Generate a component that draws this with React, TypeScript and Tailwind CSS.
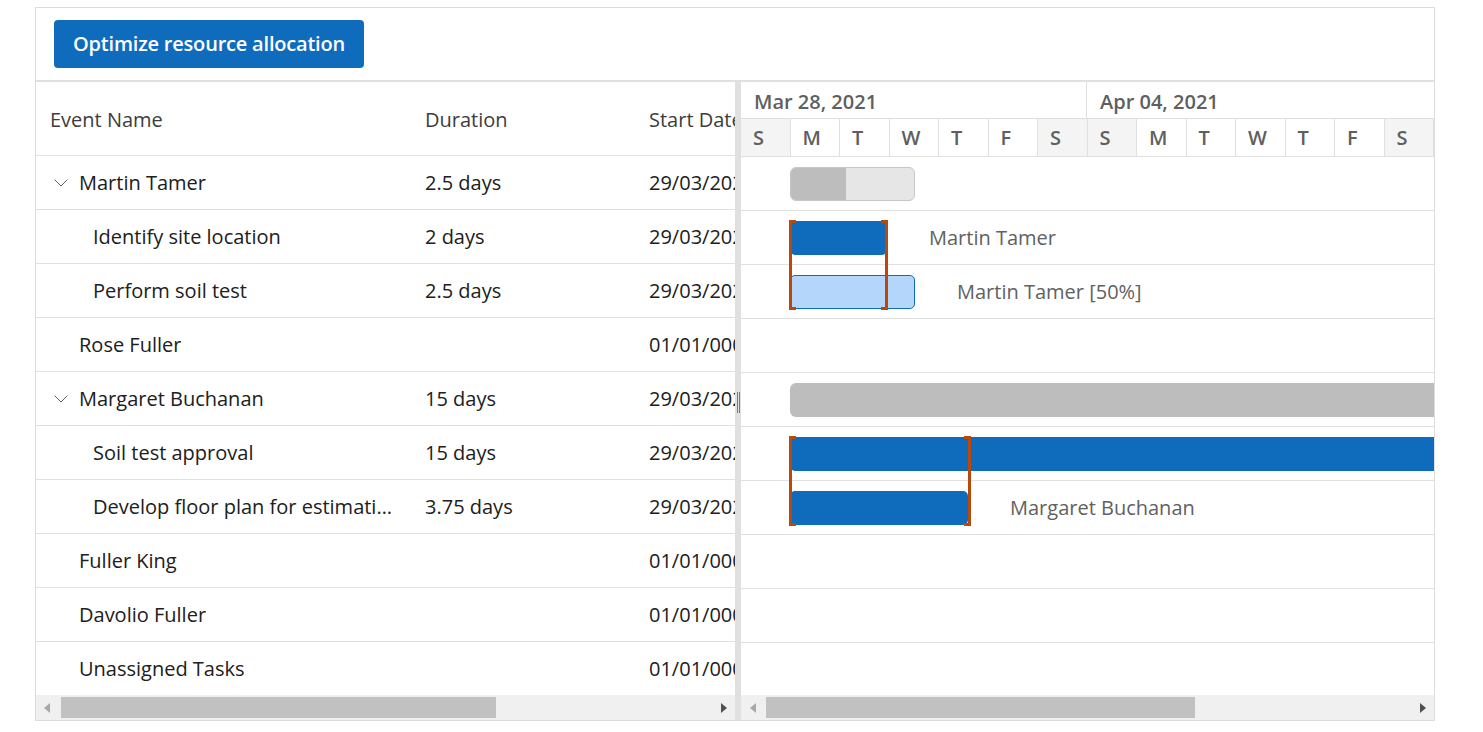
import { ChevronDown } from "lucide-react";

type Row = {
  name: string;
  level: 0 | 1;
  expandable?: boolean;
  duration?: string;
  start: string;
};

const rows: Row[] = [
  { name: "Martin Tamer", level: 0, expandable: true, duration: "2.5 days", start: "29/03/2021" },
  { name: "Identify site location", level: 1, duration: "2 days", start: "29/03/2021" },
  { name: "Perform soil test", level: 1, duration: "2.5 days", start: "29/03/2021" },
  { name: "Rose Fuller", level: 0, start: "01/01/0001" },
  { name: "Margaret Buchanan", level: 0, expandable: true, duration: "15 days", start: "29/03/2021" },
  { name: "Soil test approval", level: 1, duration: "15 days", start: "29/03/2021" },
  { name: "Develop floor plan for estimation", level: 1, duration: "3.75 days", start: "29/03/2021" },
  { name: "Fuller King", level: 0, start: "01/01/0001" },
  { name: "Davolio Fuller", level: 0, start: "01/01/0001" },
  { name: "Unassigned Tasks", level: 0, start: "01/01/0001" },
];

const days = ["S", "M", "T", "W", "T", "F", "S", "S", "M", "T", "W", "T", "F", "S"];

function LeftArrow({ dim = false }: { dim?: boolean }) {
  return (
    <svg width="6" height="10" viewBox="0 0 6 10">
      <polygon points="6,0 6,10 0,5" fill={dim ? "#a8a8a8" : "#505050"} />
    </svg>
  );
}

function RightArrow() {
  return (
    <svg width="6" height="10" viewBox="0 0 6 10">
      <polygon points="0,0 0,10 6,5" fill="#505050" />
    </svg>
  );
}

function Bracket({ left, top, width, height }: { left: number; top: number; width: number; height: number }) {
  return (
    <div className="absolute" style={{ left, top, width, height }}>
      <div className="absolute left-0 top-0 h-full w-[3px] bg-[#b8490c]" />
      <div className="absolute left-0 top-0 h-[3px] w-[7px] bg-[#b8490c]" />
      <div className="absolute left-0 bottom-0 h-[3px] w-[7px] bg-[#b8490c]" />
      <div className="absolute right-0 top-0 h-full w-[3px] bg-[#b8490c]" />
      <div className="absolute right-0 top-0 h-[3px] w-[7px] bg-[#b8490c]" />
      <div className="absolute right-0 bottom-0 h-[3px] w-[7px] bg-[#b8490c]" />
    </div>
  );
}

function ChartRow({ children }: { children?: React.ReactNode }) {
  return (
    <div className="flex h-[54px] items-center border-b border-[#e0e0e0] pl-[49px] whitespace-nowrap">
      {children}
    </div>
  );
}

function Label({ text }: { text: string }) {
  return <span className="ml-[42px] pt-[1px] text-[20px] text-[#616161]">{text}</span>;
}

export default function App() {
  return (
    <div className="min-h-screen bg-white pt-[7px] pl-[35px] font-['Open_Sans','Noto_Sans',sans-serif]">
      <div className="flex h-[714px] w-[1400px] flex-col border border-[#dcdcdc]">
        {/* Toolbar */}
        <div className="flex h-[74px] shrink-0 items-start border-b-2 border-[#e0e0e0] pt-[12px] pl-[18px]">
          <button className="h-[48px] rounded-[4px] bg-[#0f6cbd] px-[19px] text-[20px] font-semibold text-white tracking-[-0.2px]">
            Optimize resource allocation
          </button>
        </div>

        <div className="flex min-h-0 flex-1">
          {/* Grid pane */}
          <div className="flex w-[699px] shrink-0 flex-col overflow-hidden">
            <div className="flex h-[74px] shrink-0 items-center border-b border-[#e0e0e0] pt-[3px] text-[20px] text-[#3d3d3d]">
              <div className="w-[375px] shrink-0 pl-[14px]">Event Name</div>
              <div className="w-[224px] shrink-0 pl-[14px]">Duration</div>
              <div className="w-[150px] shrink-0 whitespace-nowrap pl-[14px]">Start Date</div>
            </div>
            <div className="flex-1 overflow-hidden">
              {rows.map((r, i) => (
                <div key={i} className="flex h-[54px] items-center border-b border-[#e0e0e0] pt-[1px] text-[20px] text-[#202020]">
                  <div className="flex w-[375px] shrink-0 items-center pr-[18px]">
                    {r.level === 0 ? (
                      <span className="flex w-[43px] shrink-0 items-center pl-[13px]">
                        {r.expandable && <ChevronDown size={24} strokeWidth={1} className="-mt-[1px] text-[#616161]" />}
                      </span>
                    ) : (
                      <span className="w-[57px] shrink-0" />
                    )}
                    <span className="truncate">{r.name}</span>
                  </div>
                  <div className="w-[224px] shrink-0 pl-[14px]">{r.duration ?? ""}</div>
                  <div className="w-[150px] shrink-0 whitespace-nowrap pl-[14px]">{r.start}</div>
                </div>
              ))}
            </div>
            <div className="flex h-[25px] shrink-0 items-center bg-[#f0f0f0]">
              <span className="ml-[8px] flex w-[12px]"><LeftArrow dim /></span>
              <div className="ml-[5px] h-[21px] w-[435px] bg-[#c1c1c1]" />
              <span className="ml-auto mr-[8px] flex"><RightArrow /></span>
            </div>
          </div>

          {/* Splitter */}
          <div className="flex w-[6px] shrink-0 flex-col items-center bg-[#e0e0e0]">
            <div className="mt-[310px] flex h-[21px] gap-[1px]">
              <div className="w-[1px] bg-[#7a7a7a]" />
              <div className="w-[1px] bg-[#7a7a7a]" />
            </div>
          </div>

          {/* Chart pane */}
          <div className="flex min-w-0 flex-1 flex-col overflow-hidden">
            <div className="shrink-0 text-[20px] font-semibold text-[#5f5f5f]">
              <div className="flex h-[37px] border-b border-[#e0e0e0]">
                <div className="flex w-[346px] shrink-0 items-center border-r border-[#e0e0e0] pt-[3px] pl-[13px]">Mar 28, 2021</div>
                <div className="flex w-[346px] shrink-0 items-center pt-[3px] pl-[13px]">Apr 04, 2021</div>
              </div>
              <div className="grid h-[38px] grid-cols-14 border-b border-[#e0e0e0]">
                {days.map((d, i) => (
                  <div
                    key={i}
                    className={`flex items-center justify-start border-r border-[#e0e0e0] pl-[12px] ${
                      i === 0 || i === 6 || i === 7 || i === 13 ? "bg-[#f4f4f4]" : "bg-white"
                    }`}
                  >
                    {d}
                  </div>
                ))}
              </div>
            </div>

            <div className="relative flex-1 overflow-hidden">
              {/* Martin Tamer summary */}
              <ChartRow>
                <div className="flex h-[34px] w-[125px] overflow-hidden rounded-[6px] border border-[#c6c6c6] bg-[#e6e6e6]">
                  <div className="h-full w-[55px] bg-[#bdbdbd]" />
                </div>
              </ChartRow>
              <ChartRow>
                <div className="h-[34px] w-[97px] rounded-[5px] bg-[#0f6cbd]" />
                <Label text="Martin Tamer" />
              </ChartRow>
              <ChartRow>
                <div className="h-[34px] w-[125px] rounded-[5px] border border-[#0f6cbd] bg-[#b4d6fa]" />
                <Label text="Martin Tamer [50%]" />
              </ChartRow>
              <ChartRow />
              {/* Margaret Buchanan summary */}
              <ChartRow>
                <div className="h-[34px] w-[700px] shrink-0 rounded-[6px] bg-[#bdbdbd]" />
              </ChartRow>
              <ChartRow>
                <div className="h-[34px] w-[700px] shrink-0 rounded-[5px] bg-[#0f6cbd]" />
              </ChartRow>
              <ChartRow>
                <div className="h-[34px] w-[178px] rounded-[5px] bg-[#0f6cbd]" />
                <Label text="Margaret Buchanan" />
              </ChartRow>
              <ChartRow />
              <ChartRow />
              <ChartRow />

              <Bracket left={48} top={63} width={99} height={90} />
              <Bracket left={48} top={279} width={182} height={90} />
            </div>

            <div className="flex h-[25px] shrink-0 items-center bg-[#f0f0f0]">
              <span className="ml-[9px] flex w-[12px]"><LeftArrow dim /></span>
              <div className="ml-[4px] h-[21px] w-[429px] bg-[#c1c1c1]" />
              <span className="ml-auto mr-[8px] flex"><RightArrow /></span>
            </div>
          </div>
        </div>
      </div>
    </div>
  );
}
